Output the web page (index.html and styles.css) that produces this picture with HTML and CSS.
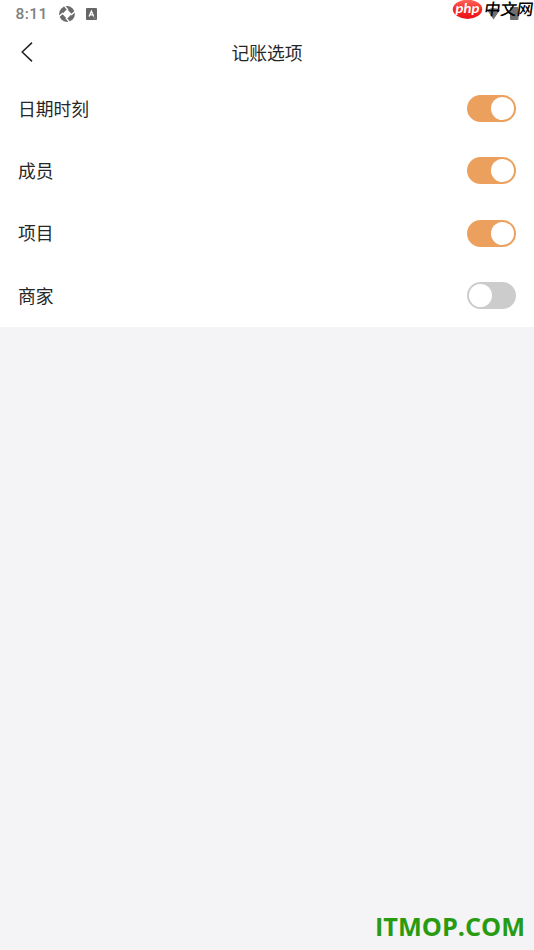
FILE: index.html
```html
<!DOCTYPE html>
<html lang="zh-CN">
<head>
<meta charset="utf-8">
<title>记账选项</title>
<link rel="stylesheet" href="styles.css">
</head>
<body>
<main class="screen">
  <div class="status">
    <span class="time">8:11</span>
    <svg class="aperture" width="16" height="16" viewBox="0 0 16 16">
      <circle cx="8" cy="8" r="7.9" fill="#6b6b6b"/>
      <path d="M8 3.3 12.7 8 8 12.7 3.3 8Z" fill="#fff"/>
      <path d="M5.6 0 9 4M16 5.6 12 9M10.4 16 7 12M0 10.4 4 7" stroke="#fff" stroke-width="1.3"/>
    </svg>
    <svg class="keyboard" width="11" height="12" viewBox="0 0 11 12">
      <rect width="11" height="12" rx="1" fill="#666"/>
      <path d="M3.1 8.4 5.4 3.2 7.7 8.4M4 6.8H6.8" fill="none" stroke="#fff" stroke-width="1.35"/>
      <path d="M7.5 10.2H9.5" stroke="#aaa" stroke-width=".8"/>
    </svg>
  </div>
  <header class="header">
    <svg class="back" width="14" height="22" viewBox="0 0 14 22"><path d="M12 1.6 2.2 11 12 20.4" fill="none" stroke="#222" stroke-width="1.5"/></svg>
    <h1 class="title">记账选项</h1>
  </header>
  <section class="options">
    <div class="row"><span class="label">日期时刻</span><span class="toggle on"><i class="knob"></i></span></div>
    <div class="row"><span class="label">成员</span><span class="toggle on"><i class="knob"></i></span></div>
    <div class="row"><span class="label">项目</span><span class="toggle on"><i class="knob"></i></span></div>
    <div class="row"><span class="label">商家</span><span class="toggle"><i class="knob"></i></span></div>
  </section>
  <svg class="brand" width="82" height="24" viewBox="0 0 82 24">
    <defs><linearGradient id="red" x1="0" y1="0" x2="0" y2="1"><stop offset="0" stop-color="#ff685d"/><stop offset=".45" stop-color="#f52f2b"/><stop offset="1" stop-color="#ea1118"/></linearGradient></defs>
    <path d="M35 10Q41.500 6 48 10L41.500 19.500Z" fill="#707070"/>
    <rect x="58" y="7" width="8.500" height="13" rx="1" fill="#707070"/>
    <ellipse cx="15.500" cy="9.300" rx="14.700" ry="9.600" fill="url(#red)"/>
    <text class="php" x="3.500" y="12.800" textLength="24" lengthAdjust="spacingAndGlyphs">php</text>
    <text class="cn" transform="translate(31.5 15) skewX(-8)" textLength="49" lengthAdjust="spacingAndGlyphs">中文网</text>
  </svg>
  <svg class="site" width="160" height="34" viewBox="0 0 160 34"><text x="1" y="26" textLength="150" lengthAdjust="spacingAndGlyphs">ITMOP.COM</text></svg>
</main>
</body>
</html>
```
FILE: styles.css
```css
* { box-sizing: border-box; }
body { margin: 0; background: #f4f4f7; font-family: "Noto Sans CJK SC", sans-serif; color: #262626; }
.screen { position: relative; height: 950px; overflow: hidden; }
.status { height: 27px; display: flex; align-items: center; padding-left: 15.5px; background: #fff; }
.time { width: 43.5px; font: 500 15.5px/27px Roboto, sans-serif; letter-spacing: .4px; color: #808080; padding-top: 1px; }
.keyboard { margin-left: 11px; }
.header { height: 50.3px; background: #fff; display: grid; grid-template-columns: 54px 1fr 54px; align-items: center; }
.back { margin-left: 20px; }
.title { margin: 0; padding-bottom: 1px; text-align: center; font-size: 17.8px; line-height: 26px; font-weight: 400; }
.options { background: #fff; padding-bottom: .5px; }
.row { height: 62.3px; display: flex; align-items: center; justify-content: space-between; padding: 0 18px; font-size: 17.8px; line-height: 26px; }
.label { padding-bottom: 1.5px; }
.toggle { width: 49px; height: 27px; padding: 2px; border-radius: 14px; background: #ccc; display: flex; }
.toggle.on { justify-content: flex-end; background: #eba05d; }
.knob { width: 23px; height: 23px; border-radius: 50%; background: #fff; }
.brand { position: absolute; top: 0; right: 0; }
.php { font: italic 700 13.5px Lato, sans-serif; fill: #fff; }
.cn { font: 500 16px "Noto Sans CJK SC", sans-serif; fill: #000; }
.site { position: absolute; right: 0; bottom: 6px; }
.site text { font: 700 25px "Open Sans", sans-serif; fill: #299b13; }
```
